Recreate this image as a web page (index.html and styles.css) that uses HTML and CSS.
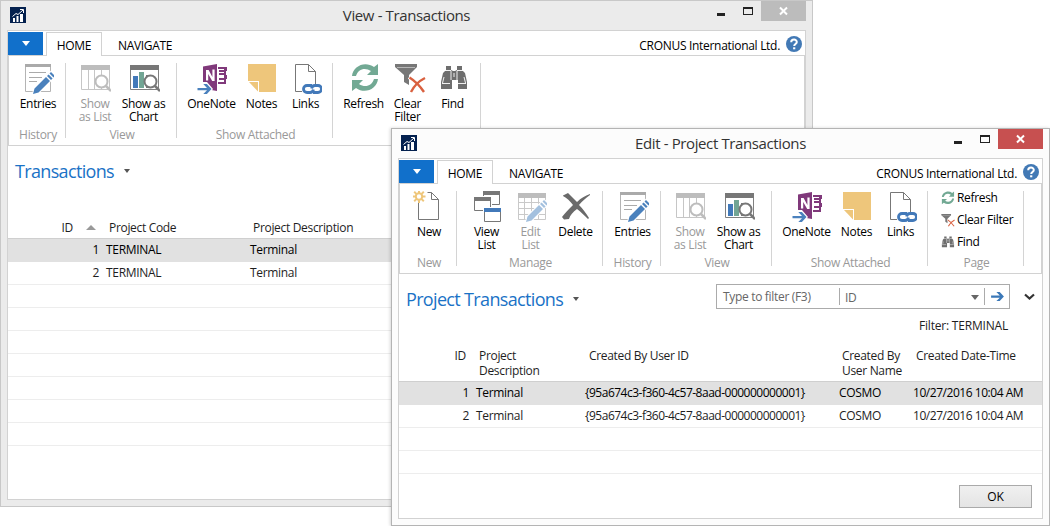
FILE: index.html
```html
<!DOCTYPE html>
<html lang="en">
<head>
<meta charset="utf-8">
<title>Transactions</title>
<link rel="stylesheet" href="styles.css">
</head>
<body>
<svg class="defs" width="0" height="0">
  <defs>
    <symbol id="app" viewBox="0 0 16 16"><path fill="#04214f" d="M0 0h16v16H0z"/><path fill="#fff" d="M3 11h2v4H3zM6.500 9h2v6h-2zM10 7h3v8h-3z"/><path d="M2.500 9.500 6 6.500l2 1L13 3M10 2.500h3.500V6" fill="none" stroke="#fff"/></symbol>
    <symbol id="help" viewBox="0 0 16 16"><circle cx="8" cy="8" r="8" fill="#4279b5"/><path d="M5.200 6.200c0-3.600 5.700-3.400 5.600-.2 0 2-2.600 2-2.600 4" fill="none" stroke="#fff" stroke-width="2"/><path fill="#fff" d="M7.100 11.300h2.200v2H7.100z"/></symbol>
    <symbol id="pencil" viewBox="0 0 32 32"><path d="M11 31l1.500-5.500L24 14l4 4-11.500 11.500zM25 13l1.600-1.600 4 4L29 17zM27.500 10.500 29 9l4 4-1.500 1.500z"/></symbol>
    <symbol id="lens" viewBox="0 0 32 32"><path d="M27 23l5 5" stroke-width="2.500" fill="none"/><circle cx="22.500" cy="18.500" r="6" fill="#fff" stroke-width="2"/></symbol>
    <symbol id="entries" viewBox="0 0 32 32"><path fill="#fff" stroke="#b4b4b4" d="M3.500 1.500h25v27h-25z"/><path fill="#aaa" d="M3 1h26v3H3z"/><path stroke="#aaa" d="M7 9.500h17M7 14.500h13M7 18.500h8"/><use href="#pencil" fill="#fff" stroke="#fff" stroke-width="2"/><use href="#pencil" fill="#4a81bd"/></symbol>
    <symbol id="list" viewBox="0 0 32 32"><path fill="#fff" stroke="#c6c6c6" d="M2.500 2.500h28v24h-28zM9.500 7v19M15.500 7v19M22.500 7v19"/><path fill="#bdbdbd" d="M2 2h29v5H2z"/><use href="#lens" stroke="#bdbdbd"/></symbol>
    <symbol id="chart" viewBox="0 0 32 32"><path fill="#fff" stroke="#808080" d="M2.500 2.500h28v24h-28z"/><path fill="#777" d="M2 2h29v5H2zM18 12h4v13h-4z"/><path fill="#4279b9" d="M5 13h5v12H5z"/><path fill="#72a594" d="M11 9h5v16h-5z"/><use href="#lens" stroke="#777"/></symbol>
    <symbol id="arrow" viewBox="0 0 14 12"><path d="M0 5h9.500L5.800 1h3.600L14 6l-4.600 5H5.800L9.500 7.300H0z"/></symbol>
    <symbol id="onenote" viewBox="0 0 32 32"><path fill="#80397b" d="M7 3.500 21 1v27L7 25.500zM22 4h9v4h-1v4h1v4h-1v5h-8v-2h6v-2h-5v-2h5v-3h-5v-2h5V9h-5V7h5V6h-6z"/><path fill="#fff" d="M10 7h2.600l3.800 7V6.500h2.200V18h-2.400l-4-7v6.500H10z"/><path fill="#fff" d="M0 22h7v-3h4l6 7-5 6H0z"/><use href="#arrow" x="1" y="20" width="15" height="12" fill="#4a81bd"/></symbol>
    <symbol id="note" viewBox="0 0 32 32"><path fill="#eec67b" d="M2 1h28v28H13V18H2z"/><path fill="#eec67b" d="M3 19h9v9.500z"/></symbol>
    <symbol id="links" viewBox="0 0 32 32"><path fill="#fff" stroke="#777" d="M12 28.500H5.500v-27h13l7 7V21M18.500 1.500v7h7"/><g fill="none" stroke="#4279b9" stroke-width="2.800"><path d="M22 22.500h-5a3.500 3.500 0 0 0 0 7h3a3.500 3.500 0 0 0 3.400-3"/><path d="M23 29.500h5a3.500 3.500 0 0 0 0-7h-3a3.500 3.500 0 0 0-3.400 3"/></g></symbol>
    <symbol id="refresh" viewBox="0 0 32 32"><g fill="#72a994"><path d="M4 13C5 3 17-2.500 26 4l4-3v11H19l4-4C17 4 10 6 8 13z"/><path d="M30 16c-1 10-13 15.500-22 9l-4 3V17h11l-4 4c6 4 13 2 15-5z"/></g></symbol>
    <symbol id="clear" viewBox="0 0 34 32"><path fill="#777" d="M3 1h22v3l-8 8v10l-5-3v-7L3 4z"/><path stroke="#fff" stroke-width=".8" d="M5 4.500h18" opacity=".6"/><path d="M17 14c6 4 11 9 15 15M33 14c-6 4-12 10-15 15" fill="none" stroke="#fff" stroke-width="4"/><path d="M17.500 14.500C23 18 28 23 32 29M33 15c-6 3-11 8-14 14" fill="none" stroke="#d9603f" stroke-width="2.400"/></symbol>
    <symbol id="find" viewBox="0 0 32 32"><path fill="#6e6e6e" d="M9 3h5v4l2 1h2l2-1V3h5v4l3 3 2 9v7h-9v-9h-6v9H4v-7l2-9 3-3z"/><path d="M8 7.500h6M20 7.500h6M14 8v9M20 8v9M7 14l-1.500 6M27 14l1.500 6M17 10v4M5 20.500h8M21 20.500h8" fill="none" stroke="#fff" stroke-width=".9"/></symbol>
    <symbol id="new" viewBox="0 0 32 32"><path fill="#fff" stroke="#777" d="M5.500 12v16.500h20v-20l-7-7h-4M18.500 1.500v7h7"/><g fill="none" stroke="#eec67b" stroke-width="2"><circle cx="6" cy="5.500" r="3.200"/><path d="M6-.8v3M6 8.800v3.200M-.5 5.500h3M9.500 5.500h3M1.200.7l2.400 2.400M8.400 7.900l2.400 2.400M10.800.7 8.400 3.100M3.600 7.900 1.200 10.300"/></g></symbol>
    <symbol id="windows" viewBox="0 0 32 32"><path fill="#fff" stroke="#777" d="M12.500.5h16v13h-16z"/><path fill="#777" d="M12 0h17v4H12z"/><path fill="#fff" d="M2 5h19v16H2z"/><path fill="#fff" stroke="#777" d="M3.500 6.500h16v13h-16z"/><path fill="#777" d="M3 6h17v4H3z"/><path fill="#fff" d="M12 16h19v16H12z"/><path fill="#fff" stroke="#777" d="M13.500 17.500h16v13h-16z"/><path fill="#4279b9" d="M13 17h17v4H13z"/></symbol>
    <symbol id="edit" viewBox="0 0 32 32"><path fill="#fff" stroke="#c9c9c9" d="M3.500 2.500h27v26h-27zM3 11.500h27M3 17.500h27M3 23.500h27M9.500 7v21M16.500 7v21M23.500 7v21"/><path fill="#bdbdbd" d="M3 2h28v5H3z"/><use href="#pencil" fill="#fff" stroke="#fff" stroke-width="2"/><use href="#pencil" fill="#a3c0de"/></symbol>
    <symbol id="delete" viewBox="0 0 32 32"><path fill="#6a6a6a" d="M3 4.500 8 2c3 3 6 6 9 9 4-4 8-6 13-8v1c-4 3-8 6-11 10 4 4 7 8 10 13l-1 1c-4-4-7-7-11-10-4 3-7 6-8 10l-5 .5-2-2.500c3-4 7-8 11-12C10 10 7 7 3 5z"/></symbol>
  </defs>
</svg>

<section class="window back">
  <header class="titlebar">
    <svg class="app-icon"><use href="#app"/></svg>
    <h1>View - Transactions</h1>
    <div class="controls"><i class="min"></i><i class="max"></i><span class="close"><svg width="9" height="8" viewBox="0 0 9 8"><path d="M1 .5l7 7M8 .5l-7 7"/></svg></span></div>
  </header>
  <div class="frame">
    <nav class="tabs">
      <span class="file"><i></i></span><span class="tab active">HOME</span><span class="tab">NAVIGATE</span>
      <span class="company">CRONUS International Ltd.</span><svg class="help"><use href="#help"/></svg>
    </nav>
    <div class="ribbon">
      <div class="group history"><div class="buttons"><div class="btn w58"><svg><use href="#entries"/></svg><span>Entries</span></div></div><p>History</p></div>
      <div class="group view"><div class="buttons"><div class="btn w49 off"><svg><use href="#list"/></svg><span>Show<br>as List</span></div><div class="btn w48"><svg><use href="#chart"/></svg><span>Show as<br>Chart</span></div></div><p>View</p></div>
      <div class="group attached"><div class="buttons"><div class="btn w58"><svg><use href="#onenote"/></svg><span>OneNote</span></div><div class="btn w42"><svg><use href="#note"/></svg><span>Notes</span></div><div class="btn w46"><svg><use href="#links"/></svg><span>Links</span></div></div><p>Show Attached</p></div>
      <div class="group page"><div class="buttons"><div class="btn w48"><svg><use href="#refresh"/></svg><span>Refresh</span></div><div class="btn w40"><svg class="wide"><use href="#clear"/></svg><span>Clear<br>Filter</span></div><div class="btn w50"><svg><use href="#find"/></svg><span>Find</span></div></div><p></p></div>
    </div>
    <div class="heading"><h2>Transactions</h2><i class="caret"></i></div>
    <div class="grid transactions">
      <div class="row head"><span>ID</span><i class="sort"></i><span>Project Code</span><span>Project Description</span></div>
      <div class="row selected"><span class="num">1</span><span>TERMINAL</span><span>Terminal</span></div>
      <div class="row"><span class="num">2</span><span>TERMINAL</span><span>Terminal</span></div>
      <div class="row"></div><div class="row"></div><div class="row"></div><div class="row"></div><div class="row"></div><div class="row"></div><div class="row"></div>
    </div>
  </div>
</section>

<section class="window front">
  <header class="titlebar">
    <svg class="app-icon"><use href="#app"/></svg>
    <h1>Edit - Project Transactions</h1>
    <div class="controls"><i class="min"></i><i class="max"></i><span class="close"><svg width="9" height="8" viewBox="0 0 9 8"><path d="M1 .5l7 7M8 .5l-7 7"/></svg></span></div>
  </header>
  <div class="frame">
    <nav class="tabs">
      <span class="file"><i></i></span><span class="tab active">HOME</span><span class="tab">NAVIGATE</span>
      <span class="company">CRONUS International Ltd.</span><svg class="help"><use href="#help"/></svg>
    </nav>
    <div class="ribbon">
      <div class="group history"><div class="buttons"><div class="btn w58"><svg><use href="#new"/></svg><span>New</span></div></div><p>New</p></div>
      <div class="group manage"><div class="buttons"><div class="btn w46"><svg><use href="#windows"/></svg><span>View<br>List</span></div><div class="btn w42 off"><svg><use href="#edit"/></svg><span>Edit<br>List</span></div><div class="btn w48"><svg><use href="#delete"/></svg><span>Delete</span></div></div><p>Manage</p></div>
      <div class="group entries"><div class="buttons"><div class="btn w58"><svg><use href="#entries"/></svg><span>Entries</span></div></div><p>History</p></div>
      <div class="group view"><div class="buttons"><div class="btn w49 off"><svg><use href="#list"/></svg><span>Show<br>as List</span></div><div class="btn w48"><svg><use href="#chart"/></svg><span>Show as<br>Chart</span></div></div><p>View</p></div>
      <div class="group attached"><div class="buttons"><div class="btn w58"><svg><use href="#onenote"/></svg><span>OneNote</span></div><div class="btn w42"><svg><use href="#note"/></svg><span>Notes</span></div><div class="btn w46"><svg><use href="#links"/></svg><span>Links</span></div></div><p>Show Attached</p></div>
      <div class="group small"><div class="stack"><div><svg><use href="#refresh"/></svg><span>Refresh</span></div><div><svg><use href="#clear"/></svg><span>Clear Filter</span></div><div><svg><use href="#find"/></svg><span>Find</span></div></div><p>Page</p></div>
    </div>
    <div class="heading"><h2>Project Transactions</h2><i class="caret"></i>
      <div class="filter"><span class="query">Type to filter (F3)</span><span class="field">ID<i></i></span><span class="go"><svg width="13" height="11"><use href="#arrow" fill="#3b78b8"/></svg></span></div>
      <svg class="chevron" width="11" height="8" viewBox="0 0 11 8"><path d="M1 1.500l4.500 4 4.500-4" fill="none" stroke="#333" stroke-width="2.200"/></svg>
    </div>
    <p class="filter-text">Filter: TERMINAL</p>
    <div class="grid projects">
      <div class="row head"><span>ID</span><span>Project<br>Description</span><span>Created By User ID</span><span>Created By<br>User Name</span><span>Created Date-Time</span></div>
      <div class="row selected"><span class="num">1</span><span>Terminal</span><span class="guid">{95a674c3-f360-4c57-8aad-000000000001}</span><span>COSMO</span><span class="date">10/27/2016 10:04 AM</span></div>
      <div class="row"><span class="num">2</span><span>Terminal</span><span class="guid">{95a674c3-f360-4c57-8aad-000000000001}</span><span>COSMO</span><span class="date">10/27/2016 10:04 AM</span></div>
      <div class="row"></div><div class="row"></div>
    </div>
    <button class="ok">OK</button>
  </div>
</section>
</body>
</html>
```
FILE: styles.css
```css
* { box-sizing: border-box; }
body { margin: 0; height: 526px; position: relative; overflow: hidden; background: #fff; color: #1e1e1e; font: 12px/13px "Open Sans", "Noto Sans", sans-serif; letter-spacing: -0.32px; white-space: nowrap; }
h1, h2, p { margin: 0; font-weight: 400; }
.defs { position: absolute; }
svg { display: block; overflow: visible; flex: none; }

.window { position: absolute; border: 1px solid #c8c8c8; padding: 0 6px 6px; display: flex; flex-direction: column; }
.back { left: 0; top: 0; width: 813px; height: 507px; background: #ebebeb; }
.front { left: 391px; top: 128px; width: 659px; height: 398px; background: #fcfcfc; border-color: #b4b4b4; box-shadow: -1px 0 3px rgba(0,0,0,.16); }

.titlebar { height: 29px; flex: none; display: grid; grid-template-columns: 1fr auto 1fr; }
.app-icon { width: 16px; height: 16px; margin: 6px 0 0 3px; }
h1 { font-size: 15px; line-height: 29px; letter-spacing: -0.38px; color: #333; }
.controls { display: flex; justify-content: flex-end; }
.min { width: 8px; height: 3px; margin: 12px 18px 0 0; background: #222; }
.max { width: 10px; height: 8px; margin: 6px 8px 0 0; border: 1px solid #222; border-top-width: 2px; }
.close { width: 45px; height: 20px; display: flex; align-items: center; justify-content: center; background: #bcbcbc; }
.close path { stroke: #fff; stroke-width: 2; }
.front .close { background: #c75050; }

.frame { flex: 1; border: 1px solid #d2d2d2; background: #fff; display: flex; flex-direction: column; }
.tabs { height: 25px; flex: none; display: flex; border-bottom: 1px solid #d2d2d2; padding-top: 1px; color: #000; }
.file { width: 35px; height: 23px; background: #1170cb; display: flex; align-items: center; justify-content: center; margin-right: 3px; }
.file i { border: 4px solid transparent; border-top: 5px solid #fff; border-bottom: 0; }
.tab { line-height: 28px; height: 23px; padding: 0 16px; }
.tab.active { width: 56px; height: 24px; padding: 0; line-height: 26px; text-align: center; border: 1px solid #d2d2d2; border-bottom: 0; background: #fff; }
.company { margin-left: auto; height: 23px; line-height: 28px; letter-spacing: -0.3px; }
.help { width: 16px; height: 16px; margin: 4px 3px 0 6px; }

.ribbon { height: 90px; flex: none; display: flex; border: 1px solid #d2d2d2; border-top: 0; padding-top: 7px; color: #000; }
.group { height: 75px; border-right: 1px solid #d4d4d4; display: flex; flex-direction: column; }
.history { width: 57px; }
.manage { width: 146px; }
.entries { width: 58px; }
.view { width: 111px; }
.attached { width: 156px; }
.page { width: 148px; }
.small { width: 96px; }
.buttons { height: 65px; flex: none; display: flex; justify-content: center; padding-left: 2px; }
.view .buttons { padding: 0 4px 0 0; }
.manage .buttons, .page .buttons { padding-left: 4px; }
.group > p { text-align: center; color: #999; line-height: 14px; padding-left: 2px; }
.btn { text-align: center; flex: none; }
.btn svg { width: 32px; height: 32px; margin: 0 auto 2px; }
.btn svg.wide { width: 34px; margin-left: 4px; }
.btn span { display: block; }
.off span { color: #999; }
.w40 { width: 40px; } .w42 { width: 42px; } .w46 { width: 46px; } .w48 { width: 48px; } .w49 { width: 49px; } .w50 { width: 50px; } .w58 { width: 58px; }
.stack { height: 65px; flex: none; padding-left: 12px; }
.stack div { height: 22px; display: flex; gap: 2px; }
.stack svg { width: 15px; height: 15px; }
.stack span { line-height: 14px; }

.heading { display: flex; height: 51px; padding-left: 7px; }
h2 { font-size: 18px; line-height: 51px; letter-spacing: -0.66px; color: #1a72c6; }
.caret { border: 3px solid transparent; border-top: 4px solid #555; border-bottom: 0; height: 0; margin: 23px 0 0 10px; }
.filter { width: 294px; height: 25px; margin: 10px 0 0 auto; border: 1px solid #ababab; display: flex; padding: 3px 0; line-height: 17px; color: #666; }
.query { width: 123px; padding-left: 6px; border-right: 1px solid #ababab; }
.field { width: 145px; padding: 1px 5px 0; border-right: 1px solid #ababab; display: flex; justify-content: space-between; }
.field i { border: 4px solid transparent; border-top: 5px solid #666; border-bottom: 0; height: 0; margin-top: 6px; }
.go { padding: 3px 0 0 6px; }
.chevron { margin: 19px 7px 0 14px; }
.filter-text { text-align: right; padding-right: 34px; height: 27px; margin-top: -6px; letter-spacing: -0.2px; }

.row { height: 23px; border-bottom: 1px solid #ededed; display: grid; line-height: 22px; }
.row.selected { background: #e1e1e1; color: #000; border-color: #e1e1e1; }
.row.head { border-color: #cfcfcf; }
.num { text-align: right; }
.transactions .row { grid-template-columns: 91px 144px 1fr; }
.transactions .row > * + span { padding-left: 7px; }
.transactions .head { height: 42px; grid-template-columns: 65px 36px 144px 1fr; padding-top: 21px; line-height: 20px; }
.transactions .row.head > span { padding-left: 0; }
.transactions .head > :first-child { text-align: right; }
.sort { border: 5px solid transparent; border-bottom: 5px solid #999; border-top: 0; width: 0; height: 0; margin: 7px 0 0 13px; }
.projects .row { grid-template-columns: 70px 109px 254px 74px 1fr; }
.projects .row:not(.head) > * + span { padding-left: 7px; }
.guid { letter-spacing: -0.5px; }
.date { letter-spacing: -0.46px; }
.projects .head { height: 46px; line-height: 15px; grid-template-columns: 67px 123px 253px 74px 1fr; padding-top: 12px; margin-top: -10px; }
.projects .head > :first-child { text-align: right; }
.projects .head > :nth-child(2) { padding-left: 13px; }
.ok { align-self: flex-end; width: 73px; height: 23px; margin: 11px 10px 0 0; padding: 0; border: 1px solid #aaa; background: linear-gradient(#f0f0f0, #e4e4e4); font: inherit; color: #000; }
```
